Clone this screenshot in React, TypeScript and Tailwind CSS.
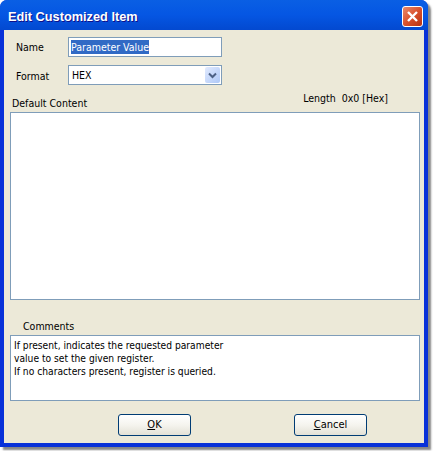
const font = "font-['DejaVu_Sans_Condensed','Liberation_Sans',Arial,sans-serif]";

function XpButton({ hotkey, rest }: { hotkey: string; rest: string }) {
	return (
		<button
			type="button"
			className="flex h-[22px] w-[73px] items-center justify-center rounded-[3px] border border-[#003c74] bg-gradient-to-b from-white via-[#f5f4ee] to-[#e3e1d6] text-[11px] text-black"
		>
			<span className="underline">{hotkey}</span>
			{rest}
		</button>
	);
}

function CloseIcon() {
	return (
		<div className="flex h-[21px] w-[21px] items-center justify-center rounded-[3px] border border-white bg-gradient-to-br from-[#e8896b] via-[#d9512c] to-[#b8320f]">
			<svg width="13" height="13" viewBox="0 0 13 13" fill="none">
				<path d="M2 2 L11 11 M11 2 L2 11" stroke="white" strokeWidth="2.4" />
			</svg>
		</div>
	);
}

function ComboArrow() {
	return (
		<div className="flex h-[16px] w-[15px] items-center justify-center rounded-[2px] bg-gradient-to-br from-[#e1eafe] to-[#aec8f7]">
			<svg width="9" height="7" viewBox="0 0 9 7" fill="none">
				<path d="M1 1.5 L4.5 5 L8 1.5" stroke="#4d6185" strokeWidth="2" />
			</svg>
		</div>
	);
}

export default function App() {
	return (
		<div className={`h-[451px] w-[434px] overflow-hidden bg-white ${font} text-[10.5px] leading-[14px] text-black`}>
			<div className="h-[447px] w-[428px] rounded-t-[7px] bg-[#0831d9] shadow-[3px_3px_2px_rgba(70,70,70,0.65)]">
				{/* title bar */}
				<div className="flex h-[30px] items-center justify-between rounded-t-[7px] bg-gradient-to-b from-[#0a5fe4] via-[#0556e3] to-[#0349d0] pl-[8px] pr-[5px] pt-[2px]">
					<span className="pt-[2px] font-['Liberation_Sans',Arial,sans-serif] text-[12.75px] font-bold text-white [text-shadow:1px_1px_#0f1089]">Edit Customized Item</span>
					<CloseIcon />
				</div>

				{/* client area */}
				<div className="mx-[4px] flex h-[413px] w-[420px] flex-col bg-[#ece9d8] pl-[6px] pr-[4px]">
					<div className="mt-[7px] flex h-[20px] items-center">
						<span className="w-[58px] pl-[6px]">Name</span>
						<div className="flex h-[20px] w-[154px] items-center border border-[#7f9db9] bg-white pl-[2px]">
							<span className="bg-[#316ac5] text-white">Parameter Value</span>
						</div>
					</div>
					<div className="mt-[8px] flex h-[20px] items-center">
						<span className="w-[58px] pl-[6px] pt-[2px]">Format</span>
						<div className="flex h-[20px] w-[154px] items-center justify-between border border-[#7f9db9] bg-white pl-[3px] pr-[1px]">
							<span>HEX</span>
							<ComboArrow />
						</div>
					</div>

					<div className="flex h-[27px] justify-between">
						<span className="pl-[2px] pt-[11px]">Default Content</span>
						<span className="pr-[32px] pt-[6px]">Length&nbsp; 0x0 [Hex]</span>
					</div>
					<div className="h-[188px] w-[410px] border border-[#7f9db9] bg-white" />

					<div className="flex h-[35px] items-end pb-[2px] pl-[13px]">Comments</div>
					<div className="h-[66px] w-[410px] border border-[#7f9db9] bg-white pl-[3px] pt-[3px] text-[10.2px] leading-[13px]">
						<div>If present, indicates the requested parameter</div>
						<div>value to set the given register.</div>
						<div>If no characters present, register is queried.</div>
					</div>

					<div className="ml-[108px] mt-[13px] flex gap-[103px]">
						<XpButton hotkey="O" rest="K" />
						<XpButton hotkey="C" rest="ancel" />
					</div>
				</div>
			</div>
		</div>
	);
}
